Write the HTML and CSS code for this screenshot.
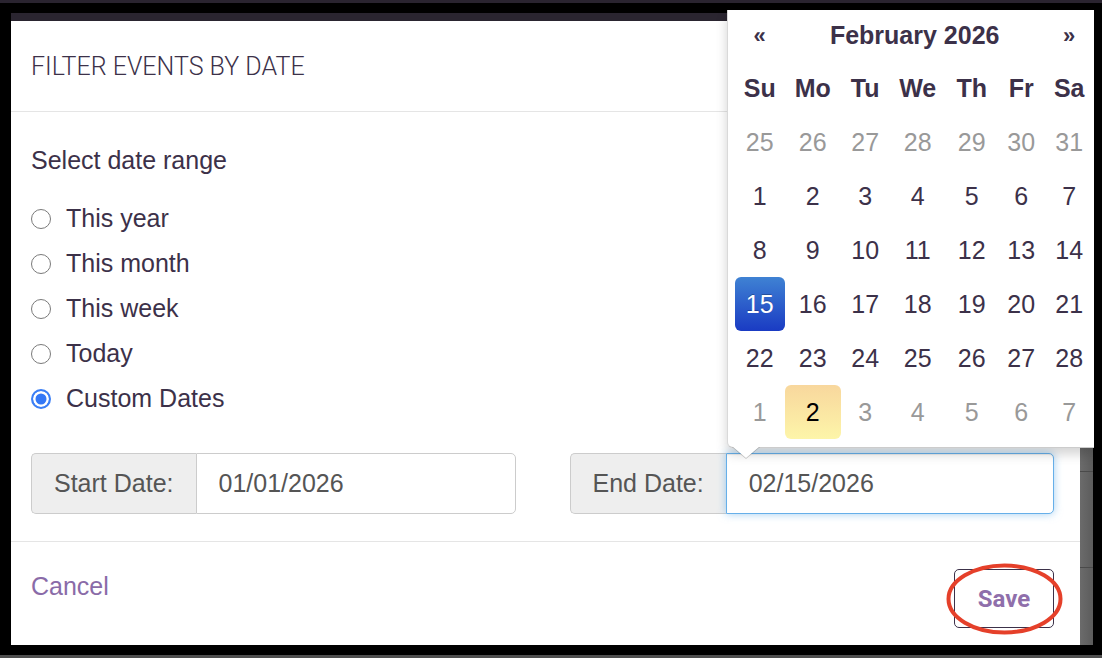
FILE: index.html
```html
<!DOCTYPE html>
<html lang="en">
<head>
    <meta charset="UTF-8">
    <meta name="viewport" content="width=device-width, initial-scale=1.0">
    <title>Filter events by date</title>
    <link rel="stylesheet" href="styles.css">
</head>
<body>

    <div class="stage">
        <div class="modal">
            <div class="modal-header">
                <h4 class="modal-title">FILTER EVENTS BY DATE</h4>
            </div>

            <div class="modal-body">
                <p class="range-label">Select date range</p>
                <div class="range-options">
                    <label class="option"><input type="radio" name="range"><span>This year</span></label>
                    <label class="option"><input type="radio" name="range"><span>This month</span></label>
                    <label class="option"><input type="radio" name="range"><span>This week</span></label>
                    <label class="option"><input type="radio" name="range"><span>Today</span></label>
                    <label class="option"><input type="radio" name="range" checked><span>Custom Dates</span></label>
                </div>

                <div class="date-row">
                    <div class="input-group">
                        <span class="addon">Start Date:</span>
                        <input type="text" class="date-input" value="01/01/2026">
                    </div>
                    <div class="input-group">
                        <span class="addon">End Date:</span>
                        <div class="picker-anchor">
                            <input type="text" class="date-input focused" value="02/15/2026">

                            <!-- datepicker dropdown, opened above the end date -->
                            <div class="datepicker">
                                <div class="dp-grid">
                                    <div class="dp-nav">«</div>
                                    <div class="dp-title">February 2026</div>
                                    <div class="dp-nav">»</div>

                                    <div class="dow">Su</div><div class="dow">Mo</div><div class="dow">Tu</div><div class="dow">We</div><div class="dow">Th</div><div class="dow">Fr</div><div class="dow">Sa</div>

                                    <div class="day old">25</div><div class="day old">26</div><div class="day old">27</div><div class="day old">28</div><div class="day old">29</div><div class="day old">30</div><div class="day old">31</div>
                                    <div class="day">1</div><div class="day">2</div><div class="day">3</div><div class="day">4</div><div class="day">5</div><div class="day">6</div><div class="day">7</div>
                                    <div class="day">8</div><div class="day">9</div><div class="day">10</div><div class="day">11</div><div class="day">12</div><div class="day">13</div><div class="day">14</div>
                                    <div class="day active">15</div><div class="day">16</div><div class="day">17</div><div class="day">18</div><div class="day">19</div><div class="day">20</div><div class="day">21</div>
                                    <div class="day">22</div><div class="day">23</div><div class="day">24</div><div class="day">25</div><div class="day">26</div><div class="day">27</div><div class="day">28</div>
                                    <div class="day new">1</div><div class="day new today">2</div><div class="day new">3</div><div class="day new">4</div><div class="day new">5</div><div class="day new">6</div><div class="day new">7</div>
                                </div>
                            </div>
                        </div>
                    </div>
                </div>
            </div>

            <div class="modal-footer">
                <a href="#" class="cancel">Cancel</a>
                <button class="save">
                    Save
                    <svg class="mark" width="117" height="72" viewBox="0 0 117 72">
                        <ellipse cx="58.5" cy="36" rx="56" ry="33.5" fill="none" stroke="#e5402a" stroke-width="4"/>
                    </svg>
                </button>
            </div>
        </div>
        <div class="page-edge"></div>
    </div>

</body>
</html>
```

FILE: styles.css
```css
html {
    height: 100%;
    background: linear-gradient(to bottom, #2a2430 0, #2a2430 3px, #000 3px, #000 655px, #4f4f4f 655px);
}

body {
    margin: 0;
    height: 100%;
    font-family: 'Liberation Sans', Arial, sans-serif;
    color: #3c3149;
    overflow: hidden;
}

.stage {
    display: flex;
    margin: 13px 9px 0 11px;
    height: 632px;
    background-color: #2a2530;
}

.modal {
    flex: none;
    width: 1069px;
    margin-top: 8px;
    background-color: #fff;
    position: relative;
}

.page-edge {
    flex: 1;
    margin-top: 8px;
    background:
        linear-gradient(#4a4a4a, #4a4a4a) 0 450px / 100% 1px no-repeat,
        linear-gradient(#4a4a4a, #4a4a4a) 0 546px / 100% 1px no-repeat,
        linear-gradient(to right, #6b6b6b, #5c5c5c);
}

/* header */
.modal-header {
    height: 90px;
    display: flex;
    align-items: center;
    padding-left: 20px;
    border-bottom: 1px solid #e5e5e5;
}

.modal-title {
    margin: 0;
    font-family: 'Roboto', sans-serif;
    font-weight: 300;
    font-size: 25px;
    color: #3c3149;
}

/* body */
.modal-body {
    padding: 30px 26px 27px 20px;
}

.range-label {
    margin: 0 0 18px;
    font-size: 25px;
    line-height: 36px;
}

.option {
    display: flex;
    align-items: center;
    gap: 15px;
    height: 45px;
    font-size: 25px;
}

.option input {
    appearance: none;
    -webkit-appearance: none;
    flex: none;
    width: 20px;
    height: 20px;
    margin: 0;
    border: 1.5px solid #7a7a7a;
    border-radius: 50%;
    background-color: #fff;
}

.option input:checked {
    border: 2px solid #3b7ff5;
    background-color: #3478f6;
    box-shadow: inset 0 0 0 2.5px #fff;
}

.date-row {
    display: grid;
    grid-template-columns: minmax(0, 1fr) minmax(0, 1fr);
    column-gap: 54px;
    margin-top: 32px;
}

.input-group {
    display: flex;
    height: 61px;
    min-width: 0;
}

.addon {
    flex: none;
    display: flex;
    align-items: center;
    padding: 0 22px;
    white-space: nowrap;
    background-color: #eee;
    border: 1px solid #ccc;
    border-right: 0;
    border-radius: 5px 0 0 5px;
    color: #555;
    font-size: 25px;
}

.date-input {
    flex: 1;
    width: 0;
    min-width: 0;
    box-sizing: border-box;
    height: 61px;
    margin: 0;
    padding: 0 22px;
    border: 1px solid #ccc;
    border-radius: 0 5px 5px 0;
    font-family: 'Liberation Sans', Arial, sans-serif;
    font-size: 25px;
    color: #555;
    outline: none;
}

.date-input.focused {
    border-color: #66afe9;
    box-shadow: inset 0 1px 1px rgba(0, 0, 0, 0.075), 0 0 8px rgba(102, 175, 233, 0.6);
}

.picker-anchor {
    flex: 1;
    width: 0;
    min-width: 0;
    display: flex;
    position: relative;
}

/* datepicker */
.datepicker {
    position: absolute;
    left: 1px;
    bottom: calc(100% + 5px);
    width: 367px;
    padding: 0 0 8px 7px;
    box-sizing: border-box;
    background-color: #fff;
    border-left: 1px solid rgba(0, 0, 0, 0.15);
    border-bottom: 1px solid rgba(0, 0, 0, 0.2);
    border-radius: 0 0 0 6px;
    box-shadow: 0 6px 12px rgba(0, 0, 0, 0.175);
    z-index: 5;
}

.datepicker::before,
.datepicker::after {
    content: '';
    position: absolute;
    border-style: solid;
    border-color: transparent;
}

.datepicker::before {
    left: 4px;
    bottom: -12px;
    border-width: 12px 14px 0;
    border-top-color: rgba(0, 0, 0, 0.2);
}

.datepicker::after {
    left: 5px;
    bottom: -11px;
    border-width: 11px 13px 0;
    border-top-color: #fff;
}

.dp-grid {
    display: grid;
    grid-template-columns: 50px 56px 49px 56px 52px 47px 49px;
    grid-template-rows: 51px repeat(7, 54px);
    font-size: 25px;
}

.dp-grid > div {
    display: flex;
    align-items: center;
    justify-content: center;
}

.dp-nav,
.dp-title,
.dow {
    font-weight: bold;
}

.dp-nav {
    font-size: 22px;
}

.dp-title {
    grid-column: 2 / 7;
}

.day {
    border-radius: 6px;
}

.day.old,
.day.new {
    color: #999;
}

.day.active {
    color: #fff;
    background-image: linear-gradient(to bottom, #3f82d3, #1a3bc3);
    text-shadow: 0 -1px 0 rgba(0, 0, 0, 0.25);
}

.day.today {
    color: #000;
    background-image: linear-gradient(to bottom, #f8d79d, #fdf5a9);
}

/* footer */
.modal-footer {
    display: flex;
    justify-content: space-between;
    align-items: flex-start;
    height: 76px;
    padding: 27px 26px 0 20px;
    border-top: 1px solid #e5e5e5;
}

.cancel {
    font-size: 25px;
    line-height: 34px;
    color: #8a6ba8;
    text-decoration: none;
}

.save {
    position: relative;
    width: 100px;
    height: 59px;
    padding: 0;
    background-color: #fff;
    border: 1px solid #3c3149;
    border-radius: 5px;
    font-family: 'Roboto', sans-serif;
    font-weight: bold;
    font-size: 24px;
    color: #8f6fab;
}

.mark {
    position: absolute;
    left: -9px;
    top: -7px;
    pointer-events: none;
}
```
